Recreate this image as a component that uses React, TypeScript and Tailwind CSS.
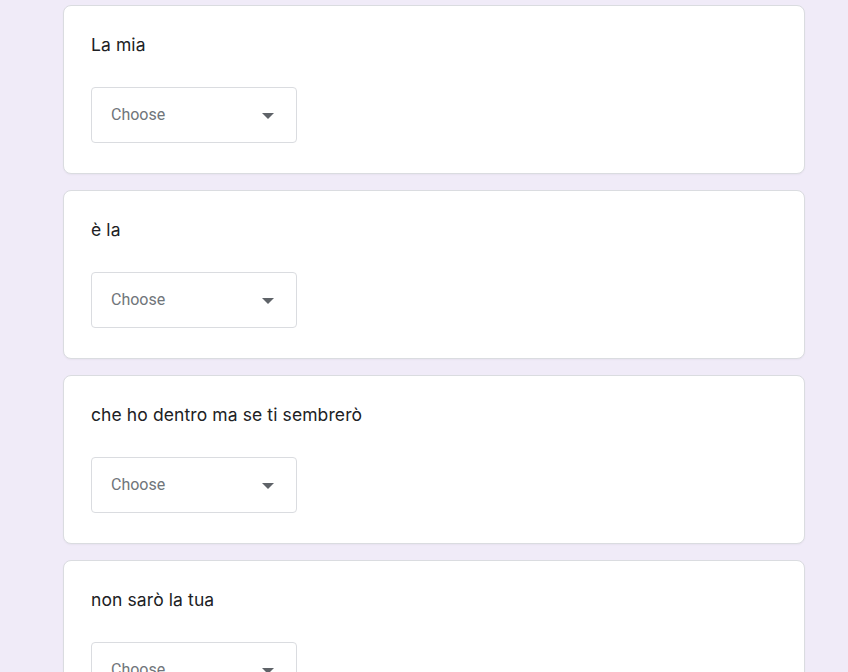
const questions = ["La mia", "è la", "che ho dentro ma se ti sembrerò", "non sarò la tua"]

function Dropdown() {
  return (
    <div className="mt-[30px] flex h-[56px] w-[206px] items-center justify-between rounded-[4px] border border-[#dadce0] bg-white pl-[19px] pr-[22px]">
      <span className="text-[16px] text-[#70757a]" style={{ fontFamily: "Roboto, sans-serif" }}>
        Choose
      </span>
      <svg width="12" height="6" viewBox="0 0 10 5" className="mt-[1px]">
        <path d="M0 0 L5 5 L10 0 Z" fill="#5f6368" />
      </svg>
    </div>
  )
}

export default function App() {
  return (
    <div className="min-h-[672px] w-[848px] bg-[#f0ebf8] pt-[5px]" style={{ fontFamily: "Inter, 'Open Sans', sans-serif" }}>
      <div className="ml-[63px] flex w-[742px] flex-col gap-[16px]">
        {questions.map((q) => (
          <div
            key={q}
            className="h-[169px] rounded-[8px] border border-[#dadce0] bg-white pl-[27px] pt-[27px] shadow-[0_1px_2px_rgba(0,0,0,0.04)]"
          >
            <p className="text-[17.5px] leading-6 tracking-[0.1px] text-[#202124]">{q}</p>
            <Dropdown />
          </div>
        ))}
      </div>
    </div>
  )
}
